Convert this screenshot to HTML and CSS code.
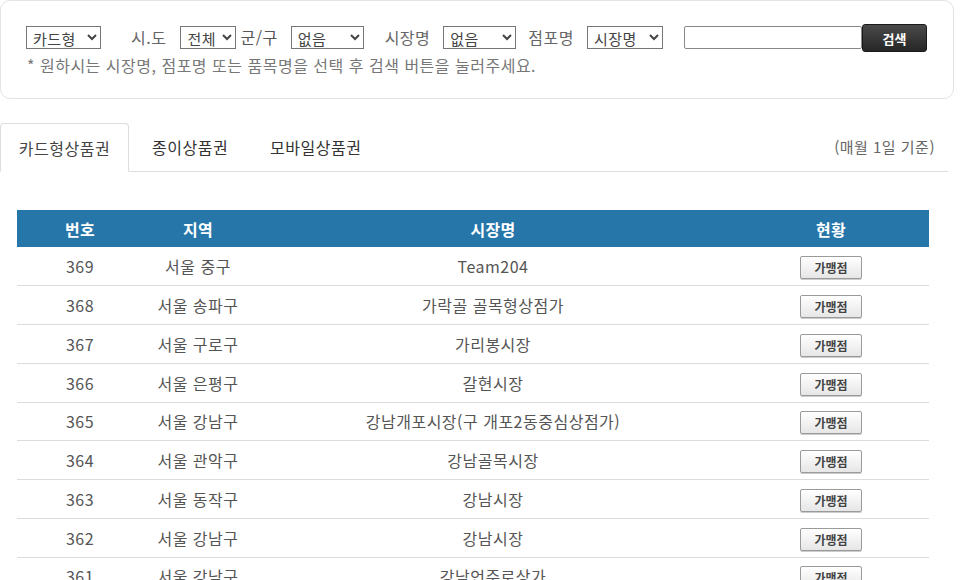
FILE: index.html
```html
<!DOCTYPE html>
<html lang="ko">
<head>
<meta charset="utf-8">
<link rel="stylesheet" href="styles.css">
</head>
<body>
<div class="search-box">
  <div class="search-row">
    <select class="sel sel-type"><option>카드형</option></select>
    <span class="lbl lbl-sido">시.도</span>
    <select class="sel sel-sido"><option>전체</option></select>
    <span class="lbl lbl-gu">군/구</span>
    <select class="sel sel-gu"><option>없음</option></select>
    <span class="lbl lbl-market">시장명</span>
    <select class="sel sel-market"><option>없음</option></select>
    <span class="lbl lbl-store">점포명</span>
    <select class="sel sel-store"><option>시장명</option></select>
    <input class="kw" type="text">
    <button class="btn-search">검색</button>
  </div>
  <p class="hint">* 원하시는 시장명, 점포명 또는 품목명을 선택 후 검색 버튼을 눌러주세요.</p>
</div>

<div class="tabs">
  <span class="tab active">카드형상품권</span>
  <span class="tab">종이상품권</span>
  <span class="tab">모바일상품권</span>
  <span class="basis">(매월 1일 기준)</span>
</div>

<table class="list">
  <thead>
    <tr><th class="c-no">번호</th><th class="c-area">지역</th><th class="c-name">시장명</th><th class="c-stat">현황</th></tr>
  </thead>
  <tbody>
    <tr><td>369</td><td>서울 중구</td><td>Team204</td><td><span class="btn-store">가맹점</span></td></tr>
    <tr><td>368</td><td>서울 송파구</td><td>가락골 골목형상점가</td><td><span class="btn-store">가맹점</span></td></tr>
    <tr><td>367</td><td>서울 구로구</td><td>가리봉시장</td><td><span class="btn-store">가맹점</span></td></tr>
    <tr><td>366</td><td>서울 은평구</td><td>갈현시장</td><td><span class="btn-store">가맹점</span></td></tr>
    <tr><td>365</td><td>서울 강남구</td><td>강남개포시장(구 개포2동중심상점가)</td><td><span class="btn-store">가맹점</span></td></tr>
    <tr><td>364</td><td>서울 관악구</td><td>강남골목시장</td><td><span class="btn-store">가맹점</span></td></tr>
    <tr><td>363</td><td>서울 동작구</td><td>강남시장</td><td><span class="btn-store">가맹점</span></td></tr>
    <tr><td>362</td><td>서울 강남구</td><td>강남시장</td><td><span class="btn-store">가맹점</span></td></tr>
    <tr><td>361</td><td>서울 강남구</td><td>강남언주로상가</td><td><span class="btn-store">가맹점</span></td></tr>
  </tbody>
</table>
</body>
</html>
```

FILE: styles.css
```css
* { box-sizing: border-box; }
html, body { margin: 0; padding: 0; background: #fff; }
body {
  font-family: "Noto Sans CJK KR", "Noto Sans", sans-serif;
  font-size: 16px;
  letter-spacing: 0.5px;
  color: #555;
  width: 962px;
  height: 580px;
  overflow: hidden;
}

.search-box {
  width: 954px;
  height: 99px;
  border: 1px solid #e3e3e3;
  border-radius: 10px;
  padding: 21px 0 0 25px;
}
.search-row {
  display: flex;
  align-items: center;
  height: 30px;
}
.sel {
  font-family: "Noto Sans CJK KR", sans-serif;
  font-size: 15px;
  letter-spacing: 0.5px;
  color: #444;
  height: 23px;
  padding: 0 0 0 2px;
  border: 1px solid #767676;
  border-radius: 0;
  background: #fff;
  line-height: 20px;
}
.sel-type { width: 75px; }
.sel-sido { width: 56px; }
.sel-gu { width: 73px; }
.sel-market { width: 73px; }
.sel-store { width: 76px; }
.lbl { color: #666; font-size: 16px; line-height: 20px; }
.lbl-sido { margin: 0 14px 0 30px; }
.lbl-gu { margin: 0 13px 0 4px; color: #555; }
.lbl-market { margin: 0 13px 0 21px; }
.lbl-store { margin: 0 13px 0 12px; }
.kw {
  margin-left: 21px;
  width: 178px;
  height: 23px;
  border: 1px solid #888;
  border-radius: 2px;
  padding: 0;
}
.btn-search {
  width: 65px;
  height: 28px;
  border: 1px solid #1a1a1a;
  border-radius: 3px;
  background: linear-gradient(#4a4a4a, #262626);
  color: #fff;
  font-family: "Noto Sans CJK KR", sans-serif;
  font-size: 13px;
  font-weight: bold;
  padding: 0;
  margin-top: 2px;
}
.hint {
  margin: 2px 0 0 1px;
  font-size: 16px;
  color: #777;
  line-height: 22px;
}

.tabs {
  margin-top: 24px;
  width: 948px;
  height: 49px;
  display: flex;
  align-items: stretch;
  border-bottom: 1px solid #ddd;
}
.tab {
  display: flex;
  align-items: center;
  color: #333;
  font-size: 16px;
}
.tab.active {
  width: 129px;
  justify-content: center;
  border: 1px solid #ddd;
  border-bottom: 1px solid #fff;
  border-radius: 4px 4px 0 0;
  margin-bottom: -1px;
  color: #444;
}
.tab:nth-child(2) { margin-left: 23px; }
.tab:nth-child(3) { margin-left: 42px; }
.basis {
  margin-left: auto;
  margin-right: 13px;
  display: flex;
  align-items: center;
  color: #666;
  font-size: 15px;
  padding-bottom: 2px;
}

.list {
  margin: 38px 0 0 17px;
  width: 912px;
  border-collapse: collapse;
  table-layout: fixed;
}
.list th {
  background: #2676aa;
  color: #fff;
  font-weight: bold;
  font-size: 16px;
  letter-spacing: 0.3px;
  height: 37px;
  padding: 0;
}
.c-no { width: 126px; }
.c-area { width: 110px; }
.c-name { width: 480px; }
.c-stat { width: 196px; }
.list td {
  text-align: center;
  height: 38.75px;
  padding: 0;
  border-bottom: 1px solid #dcdcdc;
  color: #555;
  font-size: 16px;
}
.btn-store {
  display: inline-block;
  width: 62px;
  height: 23px;
  line-height: 21px;
  border: 1px solid #9a9a9a;
  border-radius: 2px;
  background: linear-gradient(#ffffff, #e6e6e6);
  box-shadow: 0 1px 0 #ccc;
  font-size: 12px;
  letter-spacing: 0;
  font-weight: bold;
  color: #444;
  vertical-align: middle;
}
```
